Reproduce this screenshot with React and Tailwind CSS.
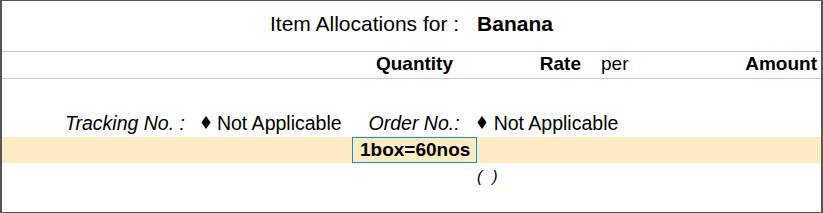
import React from "react";

function Diamond() {
  return (
    <svg width="10" height="13" viewBox="0 0 10 13" className="block">
      <polygon points="5,0 9.6,6.5 5,13 0.4,6.5" fill="#000" />
    </svg>
  );
}

export default function App() {
  return (
    <div
      className="w-[823px] h-[213px] bg-white border-y border-x-2 border-[#555555] text-black overflow-hidden"
      style={{ fontFamily: '"Liberation Sans", Arial, sans-serif' }}
    >
      {/* Title */}
      <div className="h-[51px] border-b border-[#c8c8c8] flex justify-center pt-[11px] text-[21px] leading-[24px]">
        <span>Item Allocations for :</span>
        <span className="ml-[18px] font-bold">Banana</span>
      </div>

      {/* Column headers */}
      <div className="h-[27px] border-b border-[#c8c8c8] flex pt-[1px] text-[19px] leading-[22px]">
        <div className="w-[451px] text-right font-bold">Quantity</div>
        <div className="w-[128px] text-right font-bold">Rate</div>
        <div className="pl-[20px]">per</div>
        <div className="flex-1 text-right font-bold pr-[4px]">Amount</div>
      </div>

      {/* Tracking row */}
      <div className="h-[58px] pt-[33px] flex items-start text-[19.5px] leading-[22px]">
        <span className="ml-[63px] italic">Tracking No. :</span>
        <span className="ml-[16px] mt-[4px]">
          <Diamond />
        </span>
        <span className="ml-[6px]">Not Applicable</span>
        <span className="ml-[27px] italic">Order No.:</span>
        <span className="ml-[17px] mt-[4px]">
          <Diamond />
        </span>
        <span className="ml-[7px]">Not Applicable</span>
      </div>

      {/* Highlighted band */}
      <div className="h-[26px] bg-[#fdebc3] flex">
        <div className="ml-[350px] w-[125px] h-[26px] border border-[#1e8ad0] pl-[7px] text-[19px] leading-[24px] font-bold">
          1box=60nos
        </div>
      </div>

      {/* Bottom parens */}
      <div className="flex pt-[4px] text-[16px] leading-[20px] italic">
        <span className="ml-[475px]">(</span>
        <span className="ml-[10px]">)</span>
      </div>
    </div>
  );
}
